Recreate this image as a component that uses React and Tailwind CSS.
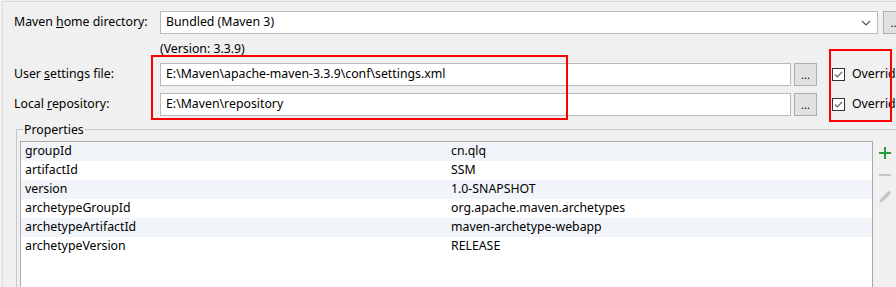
import React from "react";

const font = { fontFamily: '"Noto Sans", "Open Sans", sans-serif' };

function Field({ value, className }) {
  return (
    <div className={"h-[23px] bg-white border border-[#b9b9b9] flex items-center pl-[5px] text-black " + className}>
      {value}
    </div>
  );
}

function DotsButton({ className }) {
  return (
    <div className={"h-[23px] w-[23px] bg-[#e1e1e1] border border-[#adadad] flex items-end justify-center pb-[5px] text-[11px] leading-none text-black " + className}>
      ...
    </div>
  );
}

function Check() {
  return (
    <div className="w-[13px] h-[13px] bg-white border border-[#333] flex items-center justify-center">
      <svg width="11" height="11" viewBox="0 0 11 11">
        <path d="M2 5.5 L4.3 7.8 L9 3" fill="none" stroke="#666" strokeWidth="1.2" />
      </svg>
    </div>
  );
}

const rows = [
  ["groupId", "cn.qlq"],
  ["artifactId", "SSM"],
  ["version", "1.0-SNAPSHOT"],
  ["archetypeGroupId", "org.apache.maven.archetypes"],
  ["archetypeArtifactId", "maven-archetype-webapp"],
  ["archetypeVersion", "RELEASE"],
];

export default function App() {
  return (
    <div className="w-[896px] h-[287px] bg-[#f0f0f0] overflow-hidden relative text-[12.3px] text-black" style={font}>
      <div className="ml-[2px] mt-[1px] h-[286px] border-l border-t border-[#dadada] flex flex-col">
        {/* Row 1 */}
        <div className="flex items-center mt-[9px] h-[23px]">
          <div className="w-[146px] pl-[11px] shrink-0 whitespace-nowrap">
            Maven <span className="underline">h</span>ome directory:
          </div>
          <div className="w-[11px] shrink-0" />
          <div className="h-[23px] w-[718px] shrink-0 bg-white border border-[#b9b9b9] flex items-center justify-between pl-[5px] pr-[6px]">
            <span>Bundled (Maven 3)</span>
            <svg width="10" height="6" viewBox="0 0 10 6">
              <path d="M1 1 L5 5 L9 1" fill="none" stroke="#555" strokeWidth="1.2" />
            </svg>
          </div>
          <DotsButton className="ml-[5px] shrink-0 w-[24px]" />
        </div>
        {/* Version */}
        <div className="pl-[157px] mt-[6px] h-[17px] leading-[17px]">(Version: 3.3.9)</div>
        {/* Row 2 */}
        <div className="flex items-center mt-[6px] h-[23px]">
          <div className="w-[157px] pl-[11px] shrink-0">
            User <span className="underline">s</span>ettings file:
          </div>
          <Field value={"E:\\Maven\\apache-maven-3.3.9\\conf\\settings.xml"} className="w-[631px] shrink-0" />
          <DotsButton className="ml-[3px] shrink-0" />
          <div className="ml-[15px] shrink-0">
            <Check />
          </div>
          <div className="ml-[7px] whitespace-nowrap">Override</div>
        </div>
        {/* Row 3 */}
        <div className="flex items-center mt-[7px] h-[23px]">
          <div className="w-[157px] pl-[11px] shrink-0">
            Local <span className="underline">r</span>epository:
          </div>
          <Field value={"E:\\Maven\\repository"} className="w-[631px] shrink-0" />
          <DotsButton className="ml-[3px] shrink-0" />
          <div className="ml-[15px] shrink-0">
            <Check />
          </div>
          <div className="ml-[7px] whitespace-nowrap">Override</div>
        </div>
        {/* Properties fieldset */}
        <div className="relative ml-[13px] mt-[13px] border-l border-t border-[#c8c8c8] w-[900px] h-[200px]">
          <div className="absolute left-[6px] top-[-8px] bg-[#f0f0f0] px-[1px] leading-[16px]">Properties</div>
          <div className="flex mt-[11px] ml-[3px]">
            <div className="w-[853px] h-[150px] bg-white border-l border-t border-r border-[#a9a9a9] shrink-0">
              {rows.map(([k, v], i) => (
                <div key={k} className={"flex h-[19px] items-center " + (i % 2 === 0 ? "bg-[#f1f4f9]" : "bg-white")}>
                  <div className="w-[430px] pl-[4px] shrink-0">{k}</div>
                  <div>{v}</div>
                </div>
              ))}
            </div>
            <div className="flex flex-col items-center w-[24px] pt-[5px] gap-[8px] shrink-0">
              <svg width="14" height="14" viewBox="0 0 14 14">
                <path d="M7 1 V13 M1 7 H13" stroke="#2e9b3f" strokeWidth="2" />
              </svg>
              <svg width="14" height="14" viewBox="0 0 14 14">
                <path d="M1 7 H13" stroke="#c4c4c4" strokeWidth="2" />
              </svg>
              <svg width="14" height="14" viewBox="0 0 14 14">
                <path d="M10 1.5 Q11.5 0.8 12.5 2 Q13.2 3 12.5 4 L5 11.5 L1.5 12.5 L2.5 9 Z" fill="#c4c4c4" />
              </svg>
            </div>
          </div>
        </div>
      </div>
      {/* Red annotation boxes */}
      <div className="absolute left-[151px] top-[55px] w-[417px] h-[65px] border-2 border-[#ff0000]" />
      <div className="absolute left-[829px] top-[49px] w-[63px] h-[73px] border-2 border-[#ff0000]" />
    </div>
  );
}
